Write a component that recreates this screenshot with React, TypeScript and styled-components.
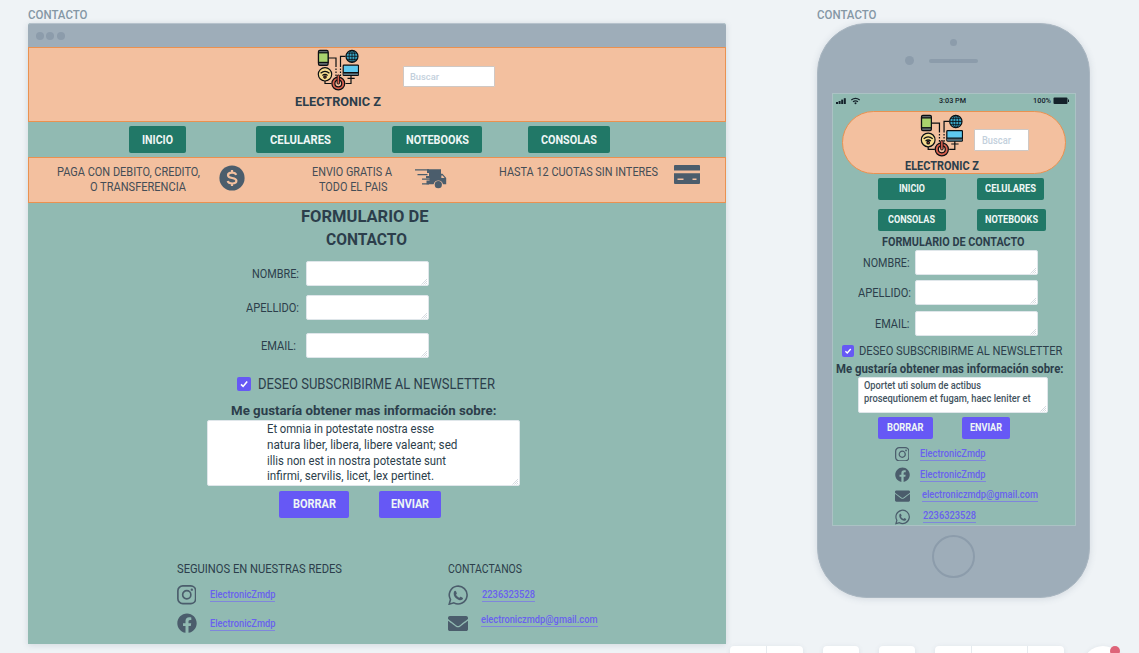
import React, { useLayoutEffect, useRef, useState } from 'react';
import styled, { createGlobalStyle } from 'styled-components';
import { FaFacebook, FaEnvelope } from 'react-icons/fa';

const c = {
  canvas: '#eff3f6',
  chrome: '#9eadb9',
  chromeDark: '#8c9cab',
  teal: '#91bab2',
  green: '#217867',
  peach: '#f3c09f',
  orange: '#ea9150',
  purple: '#6658f5',
  ink: '#2c3e4b',
  icon: '#4b5d6c',
};

const Global = createGlobalStyle`
  * { box-sizing: border-box; }
  html, body { margin: 0; height: 100%; overflow: hidden; }
  body { background: ${c.canvas}; font-family: Roboto, "Liberation Sans", sans-serif; color: ${c.ink}; }
`;

/* ---------- text fitted to a fixed column width ---------- */

const TextBox = styled.span<{ $w: number; $ml?: number; $size: number; $weight?: number; $color?: string; $lh?: number }>`
  display: block;
  flex: none;
  width: ${p => p.$w}px;
  margin-left: ${p => p.$ml ?? 0}px;
  font-size: ${p => p.$size}px;
  font-weight: ${p => p.$weight ?? 400};
  line-height: ${p => p.$lh ?? 15}px;
  color: ${p => p.$color ?? c.ink};
  white-space: nowrap;
`;
const TextInner = styled.span`
  display: inline-block;
  transform-origin: 0 50%;
`;

type FitProps = { w: number; size: number; ml?: number; weight?: number; color?: string; lh?: number; children: string };

function Fit({ w, size, ml, weight, color, lh, children }: FitProps) {
  const ref = useRef<HTMLSpanElement>(null);
  const [scale, setScale] = useState(1);
  useLayoutEffect(() => {
    const el = ref.current;
    if (!el) return;
    const prev = el.style.transform;
    el.style.transform = 'none';
    const natural = el.getBoundingClientRect().width;
    el.style.transform = prev;
    if (natural > 0) setScale(w / natural);
  }, [w, size, weight, children]);
  return (
    <TextBox $w={w} $ml={ml} $size={size} $weight={weight} $color={color} $lh={lh}>
      <TextInner ref={ref} style={{ transform: `scaleX(${scale})` }}>{children}</TextInner>
    </TextBox>
  );
}

/* ---------- shared parts ---------- */

const Canvas = styled.main`
  position: relative;
  width: 1139px;
  height: 653px;
  overflow: hidden;
  background: ${c.canvas};
`;
const Artboard = styled.section<{ $x: number; $w: number }>`
  position: absolute;
  left: ${p => p.$x}px;
  top: 8px;
  width: ${p => p.$w}px;
`;
const Row = styled.div<{ $mt?: number; $pl?: number; $h?: number }>`
  display: flex;
  align-items: center;
  margin-top: ${p => p.$mt ?? 0}px;
  padding-left: ${p => p.$pl ?? 0}px;
  height: ${p => (p.$h ? `${p.$h}px` : 'auto')};
`;
const ButtonBox = styled.button<{ $w: number; $h: number; $ml?: number; $purple?: boolean }>`
  display: flex;
  flex: none;
  align-items: center;
  justify-content: center;
  width: ${p => p.$w}px;
  height: ${p => p.$h}px;
  margin: 0 0 0 ${p => p.$ml ?? 0}px;
  padding: 0 0 1px;
  border: 0;
  border-radius: 2px;
  font-family: inherit;
  background: ${p => (p.$purple ? c.purple : c.green)};
`;
const SearchBox = styled.div<{ $w: number; $h: number; $ml: number; $mt: number; $pl: number }>`
  display: flex;
  flex: none;
  align-items: center;
  width: ${p => p.$w}px;
  height: ${p => p.$h}px;
  margin: ${p => p.$mt}px 0 0 ${p => p.$ml}px;
  padding-left: ${p => p.$pl}px;
  background: #fff;
  border: 1px solid #cfc8c4;
  border-radius: 1px;
`;
const FieldBox = styled.div<{ $w: number; $h: number; $ml?: number; $pt?: number; $pl?: number }>`
  display: flex;
  flex: none;
  width: ${p => p.$w}px;
  height: ${p => p.$h}px;
  margin-left: ${p => p.$ml ?? 0}px;
  padding: ${p => p.$pt ?? 0}px 0 0 ${p => p.$pl ?? 0}px;
  background: #fff;
  border: 1px solid #dfe6ea;
  border-radius: 2px;
`;
const Grip = styled.svg`
  align-self: flex-end;
  flex: none;
  margin-left: auto;
`;
const Check = styled.span<{ $s: number }>`
  display: flex;
  flex: none;
  width: ${p => p.$s}px;
  height: ${p => p.$s}px;
  border-radius: 2px;
  background: ${c.purple};
`;
const IconSlot = styled.span<{ $w: number }>`
  display: flex;
  flex: none;
  width: ${p => p.$w}px;
  justify-content: center;
  color: ${c.icon};
`;
const LinkBox = styled.a<{ $ml: number; $mt?: number }>`
  display: block;
  margin: ${p => p.$mt ?? 0}px 0 0 ${p => p.$ml}px;
  border-bottom: 1px solid #7f86dc;
`;

function Field({ w, h, ml, pt, pl, children }: { w: number; h: number; ml?: number; pt?: number; pl?: number; children?: React.ReactNode }) {
  return (
    <FieldBox $w={w} $h={h} $ml={ml} $pt={pt} $pl={pl}>
      {children}
      <Grip width="7" height="7" viewBox="0 0 7 7" stroke="#c4ccd4" strokeWidth="0.7">
        <path d="M0.5 6.5 6 1M2.5 6.5 6 3M4.5 6.5 6 5" />
      </Grip>
    </FieldBox>
  );
}

function Button({ w, h, tw, ml, size, purple, children }: { w: number; h: number; tw: number; ml?: number; size: number; purple?: boolean; children: string }) {
  return (
    <ButtonBox $w={w} $h={h} $ml={ml} $purple={purple}>
      <Fit w={tw} size={size} weight={700} color="#eef6f5">{children}</Fit>
    </ButtonBox>
  );
}

function CheckBox({ s }: { s: number }) {
  return (
    <Check $s={s}>
      <svg width={s} height={s} viewBox="0 0 14 14" fill="none" stroke="#fff" strokeWidth="1.6">
        <path d="M4 7.4 6.1 9.4 10.2 4.6" />
      </svg>
    </Check>
  );
}

function Link({ w, ml, mt, children }: { w: number; ml: number; mt?: number; children: string }) {
  return (
    <LinkBox $ml={ml} $mt={mt}>
      <Fit w={w} size={10} weight={500} color="#6961ee" lh={12}>{children}</Fit>
    </LinkBox>
  );
}

/* ---------- icons ---------- */

function Instagram({ s }: { s: number }) {
  return (
    <svg width={s} height={s} viewBox="0 0 20 20" fill="none" stroke={c.icon} strokeWidth="1.7">
      <rect x="0.9" y="0.9" width="18.2" height="18.2" rx="5" />
      <circle cx="10" cy="10" r="4.2" />
      <circle cx="15.2" cy="4.8" r="1.2" fill={c.icon} stroke="none" />
    </svg>
  );
}

function Whatsapp({ s }: { s: number }) {
  return (
    <svg width={s} height={s} viewBox="0 0 20 20" fill="none">
      <path d="M1.200 18.900 2.500 14.300a8.900 8.900 0 1 1 3.400 3.300z" stroke={c.icon} strokeWidth="1.600" />
      <path d="M5.900 6.700c.5-1.200 1.700-1.500 2.200-.4l.7 1.700c.2.500-.6 1.100-.8 1.500.8 1.500 1.900 2.400 3.400 3 .4-.3 1-1.200 1.400-1l1.800.9c.7.400.4 1.400-.3 1.900-1 .8-2.200.8-3.400.4-2.600-.9-4.300-2.700-5-4.700-.3-1.100-.3-2.300 0-3.300z" fill={c.icon} />
    </svg>
  );
}

function Dollar() {
  return (
    <svg width="26" height="26" viewBox="0 0 26 26" fill="none">
      <circle cx="13" cy="13" r="12.6" fill={c.icon} />
      <path d="M17.2 9.9C16.6 8.3 15.1 7.7 13 7.700c-2.400 0-4 1-4 2.600 0 3.900 8.400 1.500 8.400 5.500 0 1.700-1.800 2.700-4.200 2.700-2.300 0-4-.8-4.500-2.500M13 5v3M13 18v3" stroke={c.peach} strokeWidth="2.200" />
    </svg>
  );
}

function Truck() {
  return (
    <svg width="32" height="21" viewBox="0 0 32 21">
      <g stroke={c.icon} strokeWidth="1.300">
        <path d="M0 1.900h14M2.500 6.600h10M7 11.200h8M7 15.800h7" />
      </g>
      <path fill={c.icon} d="M12 1.200h14v4.600h1.500l3.700 4.200v6.300h-3.200a4.800 4.800 0 0 0-9.400 0H11.500V12.600h3v-2.400H11V8h3V5h-2z" />
      <path fill={c.peach} d="M26.300 7.400h1.300l2 2.600h-3.300z" />
      <circle cx="23.300" cy="16.700" r="3.600" fill={c.icon} />
    </svg>
  );
}

function Card() {
  return (
    <svg width="26" height="19" viewBox="0 0 26 19" fill={c.icon}>
      <path d="M1 0h24a1 1 0 0 1 1 1v4.500H0V1a1 1 0 0 1 1-1zM0 8.300h26V18a1 1 0 0 1-1 1H1a1 1 0 0 1-1-1z" />
      <path d="M3.500 14.200h6M18.500 14.200h4" stroke={c.peach} strokeWidth="1.500" />
    </svg>
  );
}

function Logo({ s }: { s: number }) {
  return (
    <svg width={s} height={s} viewBox="0 0 42 42" fill="none" stroke="#0b0f12" strokeWidth="1.200">
      <path d="M11 9h8v9M28.500 7.300h-5V18M8 32v2.500h6.500M34 29v5.500h-5.500" />
      <path d="M19 19.500V27M23.500 19.500V27" strokeDasharray="1.500 1.500" />
      <rect x="1.500" y="1.300" width="9.600" height="15" rx="1.300" fill="#5d666b" />
      <rect x="1.500" y="3.800" width="9.600" height="9.600" fill="#a9d36d" />
      <circle cx="35" cy="7.300" r="6" fill="#38a5c6" />
      <path d="M29 7.300h12M35 1.300v12M30.200 4.200h9.600M30.200 10.400h9.600" strokeWidth="0.800" />
      <ellipse cx="35" cy="7.300" rx="2.900" ry="6" strokeWidth="0.800" />
      <circle cx="8" cy="25.300" r="6.700" fill="#f6dc8f" />
      <path d="M3.600 24.200q4.400-3.700 8.800 0M5.400 26.400q2.600-2 5.200 0" />
      <circle cx="8" cy="28" r="1.200" fill="#d8503f" />
      <rect x="26.200" y="16.200" width="15.300" height="10.300" rx="0.800" fill="#5fc9ef" />
      <path d="M26.500 24.800h14.800" stroke="#59646b" strokeWidth="2" />
      <path d="M26.200 23.600h15.300M30.500 29.300h7.200M34 26.500v3" />
      <circle cx="21.300" cy="34.500" r="6.400" fill="#d9604d" />
      <circle cx="21.300" cy="34.500" r="3.400" fill="#f3c09f" />
      <rect x="20.100" y="26" width="2.500" height="9" rx="1" fill="#d9604d" strokeWidth="0.900" />
    </svg>
  );
}

/* ---------- desktop ---------- */

const Browser = styled.div`
  display: flex;
  flex-direction: column;
  width: 698px;
  height: 621px;
  background: ${c.teal};
  border-radius: 3px 3px 0 0;
  box-shadow: 0 1px 6px rgba(70, 90, 110, 0.18);
`;
const TitleBar = styled.div`
  display: flex;
  align-items: center;
  gap: 2.500px;
  flex: none;
  height: 24px;
  padding-left: 7.500px;
  background: ${c.chrome};
  border-top: 1px solid #b6c2cc;
  border-radius: 3px 3px 0 0;
`;
const Dot = styled.i`
  width: 8px;
  height: 8px;
  border-radius: 50%;
  background: ${c.chromeDark};
`;
const Header = styled.header`
  display: flex;
  align-items: flex-start;
  flex: none;
  height: 75px;
  padding: 1px 0 0 265.500px;
  background: ${c.peach};
  border: 1px solid ${c.orange};
`;
const Brand = styled.div`
  display: flex;
  flex: none;
  flex-direction: column;
  align-items: center;
`;
const Nav = styled.nav`
  display: flex;
  align-items: flex-start;
  flex: none;
  height: 35px;
  padding: 4px 0 0 101px;
`;
const Promo = styled.div`
  display: flex;
  align-items: flex-start;
  flex: none;
  height: 46px;
  padding: 7px 0 0 27.500px;
  background: ${c.peach};
  border: 1px solid ${c.orange};
`;
const Lines = styled.div<{ $ml?: number }>`
  flex: none;
  margin-left: ${p => p.$ml ?? 0}px;
`;
const PromoIcon = styled.span<{ $ml: number; $mt?: number }>`
  display: flex;
  flex: none;
  margin: ${p => p.$mt ?? 0}px 0 0 ${p => p.$ml}px;
`;
const Footer = styled.footer`
  display: flex;
  margin-top: 43px;
  padding-left: 148.500px;
`;
const FooterColumn = styled.div`
  flex: none;
  width: 271.500px;
`;

function Desktop() {
  return (
    <Artboard $x={28} $w={698}>
      <Fit w={59.5} size={12.3} weight={500} color="#8597a5">CONTACTO</Fit>
      <Browser>
        <TitleBar><Dot /><Dot /><Dot /></TitleBar>
        <Header>
          <Brand>
            <Logo s={42} />
            <Fit w={86} size={13.2} weight={700} lh={21}>ELECTRONIC Z</Fit>
          </Brand>
          <SearchBox $w={92} $h={21} $ml={22.5} $mt={17} $pl={6}>
            <Fit w={29} size={9.8} weight={500} color="#c3d0dc">Buscar</Fit>
          </SearchBox>
        </Header>
        <Nav>
          <Button w={57} h={27} tw={31} size={12.8}>INICIO</Button>
          <Button w={88} h={27} tw={61} ml={70} size={12.8}>CELULARES</Button>
          <Button w={90} h={27} tw={63} ml={48} size={12.8}>NOTEBOOKS</Button>
          <Button w={82.5} h={27} tw={56} ml={45.5} size={12.8}>CONSOLAS</Button>
        </Nav>
        <Promo>
          <Lines>
            <Fit w={143} size={12.4} lh={14.5} color="#444d56">PAGA CON DEBITO, CREDITO,</Fit>
            <Fit w={96} ml={33.5} size={12.4} lh={14.5} color="#444d56">O TRANSFERENCIA</Fit>
          </Lines>
          <PromoIcon $ml={19.5} $mt={-0.5}><Dollar /></PromoIcon>
          <Lines $ml={67}>
            <Fit w={80} size={12.4} lh={14.5} color="#444d56">ENVIO GRATIS A</Fit>
            <Fit w={68.5} ml={7} size={12.4} lh={14.5} color="#444d56">TODO EL PAIS</Fit>
          </Lines>
          <PromoIcon $ml={23} $mt={3}><Truck /></PromoIcon>
          <Fit w={159} ml={51.5} size={12.4} lh={14.5} color="#444d56">HASTA 12 CUOTAS SIN INTERES</Fit>
          <PromoIcon $ml={16} $mt={0}><Card /></PromoIcon>
        </Promo>
        <Row $mt={2.5} $pl={273}><Fit w={127.5} size={16.2} weight={700} lh={22.7}>FORMULARIO DE</Fit></Row>
        <Row $pl={298} $mt={0.5}><Fit w={81} size={16.2} weight={700} lh={22.7}>CONTACTO</Fit></Row>
        <Row $mt={9.5} $pl={224} $h={25}>
          <Fit w={47} size={12.6}>NOMBRE:</Fit><Field w={123} h={25} ml={7} />
        </Row>
        <Row $mt={9.5} $pl={218} $h={25}>
          <Fit w={53} size={12.6}>APELLIDO:</Fit><Field w={123} h={25} ml={7} />
        </Row>
        <Row $mt={13} $pl={233} $h={25}>
          <Fit w={35} size={12.6}>EMAIL:</Fit><Field w={123} h={25} ml={10} />
        </Row>
        <Row $mt={18.5} $pl={209} $h={14}>
          <CheckBox s={14} /><Fit w={237} ml={7} size={14} lh={16}>DESEO SUBSCRIBIRME AL NEWSLETTER</Fit>
        </Row>
        <Row $mt={12} $pl={203} $h={15}><Fit w={265.5} size={13.3} weight={700}>Me gustaría obtener mas información sobre:</Fit></Row>
        <Row $mt={2} $pl={179}>
          <Field w={313} h={66} pt={1.5} pl={59}>
            <Lines>
              <Fit w={167} size={12} lh={15.6}>Et omnia in potestate nostra esse</Fit>
              <Fit w={190.5} size={12} lh={15.6}>natura liber, libera, libere valeant; sed</Fit>
              <Fit w={179} size={12} lh={15.6}>illis non est in nostra potestate sunt</Fit>
              <Fit w={167} size={12} lh={15.6}>infirmi, servilis, licet, lex pertinet.</Fit>
            </Lines>
          </Field>
        </Row>
        <Row $mt={5} $pl={251}>
          <Button w={70} h={27} tw={43} size={12.8} purple>BORRAR</Button>
          <Button w={62} h={27} tw={38} ml={30} size={12.8} purple>ENVIAR</Button>
        </Row>
        <Footer>
          <FooterColumn>
            <Fit w={165} size={12.2} lh={16}>SEGUINOS EN NUESTRAS REDES</Fit>
            <Row $mt={8} $h={20}><IconSlot $w={20}><Instagram s={19.5} /></IconSlot><Link w={65.5} ml={13} mt={1}>ElectronicZmdp</Link></Row>
            <Row $mt={8.5} $h={20}><IconSlot $w={20}><FaFacebook size={20.5} /></IconSlot><Link w={65.5} ml={13} mt={2}>ElectronicZmdp</Link></Row>
          </FooterColumn>
          <FooterColumn>
            <Fit w={74} size={12.2} lh={16}>CONTACTANOS</Fit>
            <Row $mt={8} $h={20}><IconSlot $w={20}><Whatsapp s={20.5} /></IconSlot><Link w={53} ml={14} mt={1}>2236323528</Link></Row>
            <Row $mt={8.5} $h={20}><IconSlot $w={20}><FaEnvelope size={21} /></IconSlot><Link w={116.5} ml={13} mt={-6}>electroniczmdp@gmail.com</Link></Row>
          </FooterColumn>
        </Footer>
      </Browser>
    </Artboard>
  );
}

/* ---------- phone ---------- */

const PhoneBody = styled.div`
  display: flex;
  flex-direction: column;
  align-items: center;
  width: 273px;
  height: 575px;
  padding-top: 15px;
  background: ${c.chrome};
  border: 1px solid #a9b6c1;
  border-radius: 50px;
  box-shadow: 0 1px 7px rgba(70, 90, 110, 0.16);
`;
const Sensor = styled.i`
  width: 7px;
  height: 7px;
  border-radius: 50%;
  background: ${c.chromeDark};
`;
const Speaker = styled.div`
  display: flex;
  align-items: center;
  gap: 15px;
  width: 97px;
  height: 9px;
  margin-top: 10px;
  transform: translateX(0);
`;
const Lens = styled.i`
  width: 9px;
  height: 9px;
  border-radius: 50%;
  background: ${c.chromeDark};
`;
const Slit = styled.i`
  width: 49px;
  height: 4px;
  border-radius: 2px;
  background: ${c.chromeDark};
`;
const Screen = styled.div`
  flex: none;
  width: 244px;
  height: 433px;
  margin-top: 28px;
  overflow: hidden;
  background: ${c.teal};
  border: 1px solid #abc2c4;
`;
const Pill = styled.div`
  display: flex;
  align-items: flex-start;
  width: 224px;
  height: 63px;
  margin: 4px 0 0 9px;
  padding: 2px 0 0 62px;
  background: ${c.peach};
  border: 1px solid ${c.orange};
  border-radius: 32px;
`;
const HomeButton = styled.div`
  width: 43px;
  height: 43px;
  margin-top: 9px;
  border: 2px solid ${c.chromeDark};
  border-radius: 50%;
`;

function Phone() {
  return (
    <Artboard $x={817} $w={273}>
      <Fit w={59.5} size={12.3} weight={500} color="#8597a5">CONTACTO</Fit>
      <PhoneBody>
        <Sensor />
        <Speaker><Lens /><Slit /></Speaker>
        <Screen>
          <Row $pl={3} $h={13}>
            <svg width="26" height="8" viewBox="0 0 26 8" fill="#14212a">
              <rect x="0" y="5" width="2" height="2" /><rect x="2.600" y="4" width="2" height="3" />
              <rect x="5.200" y="2.600" width="2" height="4.400" /><rect x="7.800" y="1.200" width="2" height="5.800" />
              <path d="M15.300 2.900q4.200-3.200 8.400 0M17 4.800q2.500-1.800 5 0" fill="none" stroke="#14212a" strokeWidth="1.200" />
              <circle cx="19.500" cy="6.300" r="1" />
            </svg>
            <Fit w={27} ml={77.5} size={7.8} weight={500} color="#14212a" lh={12}>3:03 PM</Fit>
            <Fit w={18} ml={67} size={7.8} weight={500} color="#14212a" lh={12}>100%</Fit>
            <svg width="18" height="8" viewBox="0 0 18 8">
              <rect x="2.500" y="0.500" width="14" height="6.500" rx="1" fill="#14212a" /><rect x="17" y="2.500" width="1" height="2.500" fill="#14212a" />
            </svg>
          </Row>
          <Pill>
            <Brand>
              <Logo s={43} />
              <Fit w={74} size={12.4} weight={700} lh={18}>ELECTRONIC Z</Fit>
            </Brand>
            <SearchBox $w={55} $h={22} $ml={-5} $mt={15} $pl={7}>
              <Fit w={29} size={10.5} weight={500} color="#c3d0dc">Buscar</Fit>
            </SearchBox>
          </Pill>
          <Row $mt={4} $pl={45}>
            <Button w={68} h={22} tw={26} size={10.4}>INICIO</Button>
            <Button w={67} h={22} tw={51} ml={31} size={10.4}>CELULARES</Button>
          </Row>
          <Row $mt={9} $pl={45}>
            <Button w={68} h={22} tw={47} size={10.4}>CONSOLAS</Button>
            <Button w={69} h={22} tw={53} ml={31} size={10.4}>NOTEBOOKS</Button>
          </Row>
          <Row $mt={4} $pl={49} $h={14}><Fit w={142.5} size={12.2} weight={700}>FORMULARIO DE CONTACTO</Fit></Row>
          <Row $mt={1} $pl={30.5} $h={25}>
            <Fit w={46.5} size={12.6}>NOMBRE:</Fit><Field w={123} h={25} ml={5} />
          </Row>
          <Row $mt={5} $pl={25.5} $h={25}>
            <Fit w={53} size={12.6}>APELLIDO:</Fit><Field w={123} h={25} ml={3.5} />
          </Row>
          <Row $mt={6} $pl={42} $h={25}>
            <Fit w={34.5} size={12.6}>EMAIL:</Fit><Field w={123} h={25} ml={5.5} />
          </Row>
          <Row $mt={8} $pl={9} $h={13}>
            <CheckBox s={12} /><Fit w={203.5} ml={5} size={13}>DESEO SUBSCRIBIRME AL NEWSLETTER</Fit>
          </Row>
          <Row $mt={5} $pl={3.5} $h={14}><Fit w={227.5} size={12} weight={700}>Me gustaría obtener mas información sobre:</Fit></Row>
          <Row $mt={1} $pl={25}>
            <Field w={190} h={36} pt={2} pl={5.5}>
              <Lines>
                <Fit w={117} size={10} weight={500} lh={12.9} color="#44545f">Oportet uti solum de actibus</Fit>
                <Fit w={166.5} size={10} weight={500} lh={12.9} color="#44545f">prosequtionem et fugam, haec leniter et</Fit>
              </Lines>
            </Field>
          </Row>
          <Row $mt={4} $pl={45}>
            <Button w={55} h={22} tw={36.5} size={10.4} purple>BORRAR</Button>
            <Button w={48} h={22} tw={32} ml={29} size={10.4} purple>ENVIAR</Button>
          </Row>
          <Row $mt={7} $pl={62} $h={16}><IconSlot $w={15}><Instagram s={14.5} /></IconSlot><Link w={65.5} ml={10.5}>ElectronicZmdp</Link></Row>
          <Row $mt={5} $pl={62} $h={16}><IconSlot $w={15}><FaFacebook size={15.5} /></IconSlot><Link w={65.5} ml={10.5}>ElectronicZmdp</Link></Row>
          <Row $mt={5} $pl={62} $h={16}><IconSlot $w={15}><FaEnvelope size={16} /></IconSlot><Link w={116} ml={12} mt={-1}>electroniczmdp@gmail.com</Link></Row>
          <Row $mt={5} $pl={62} $h={16}><IconSlot $w={15}><Whatsapp s={16} /></IconSlot><Link w={53} ml={13} mt={-1}>2236323528</Link></Row>
        </Screen>
        <HomeButton />
      </PhoneBody>
    </Artboard>
  );
}

/* ---------- floating toolbar ---------- */

const Toolbar = styled.div`
  position: absolute;
  left: 730px;
  top: 646px;
  display: flex;
`;
const ToolGroup = styled.div<{ $ml?: number }>`
  display: flex;
  height: 36px;
  margin-left: ${p => p.$ml ?? 0}px;
  background: #fff;
  border-radius: 4px;
  box-shadow: 0 1px 5px rgba(70, 90, 110, 0.12);
`;
const Tool = styled.span<{ $w: number }>`
  width: ${p => p.$w}px;
  & + & { border-left: 1px solid #e6ebef; }
`;
const Help = styled.div`
  position: relative;
  width: 40px;
  height: 40px;
  margin-left: 19px;
  border-radius: 50%;
  background: #fff;
  box-shadow: 0 1px 5px rgba(70, 90, 110, 0.12);
`;
const Badge = styled.i`
  position: absolute;
  left: 27px;
  top: 0;
  width: 10px;
  height: 10px;
  border-radius: 50%;
  background: #de6479;
`;

export default function App() {
  return (
    <>
      <Global />
      <Canvas>
        <Desktop />
        <Phone />
        <Toolbar>
          <ToolGroup><Tool $w={36} /><Tool $w={37} /></ToolGroup>
          <ToolGroup $ml={20}><Tool $w={36} /></ToolGroup>
          <ToolGroup $ml={20}><Tool $w={36} /></ToolGroup>
          <ToolGroup $ml={20}><Tool $w={36} /><Tool $w={56} /><Tool $w={37} /></ToolGroup>
          <Help><Badge /></Help>
        </Toolbar>
      </Canvas>
    </>
  );
}
